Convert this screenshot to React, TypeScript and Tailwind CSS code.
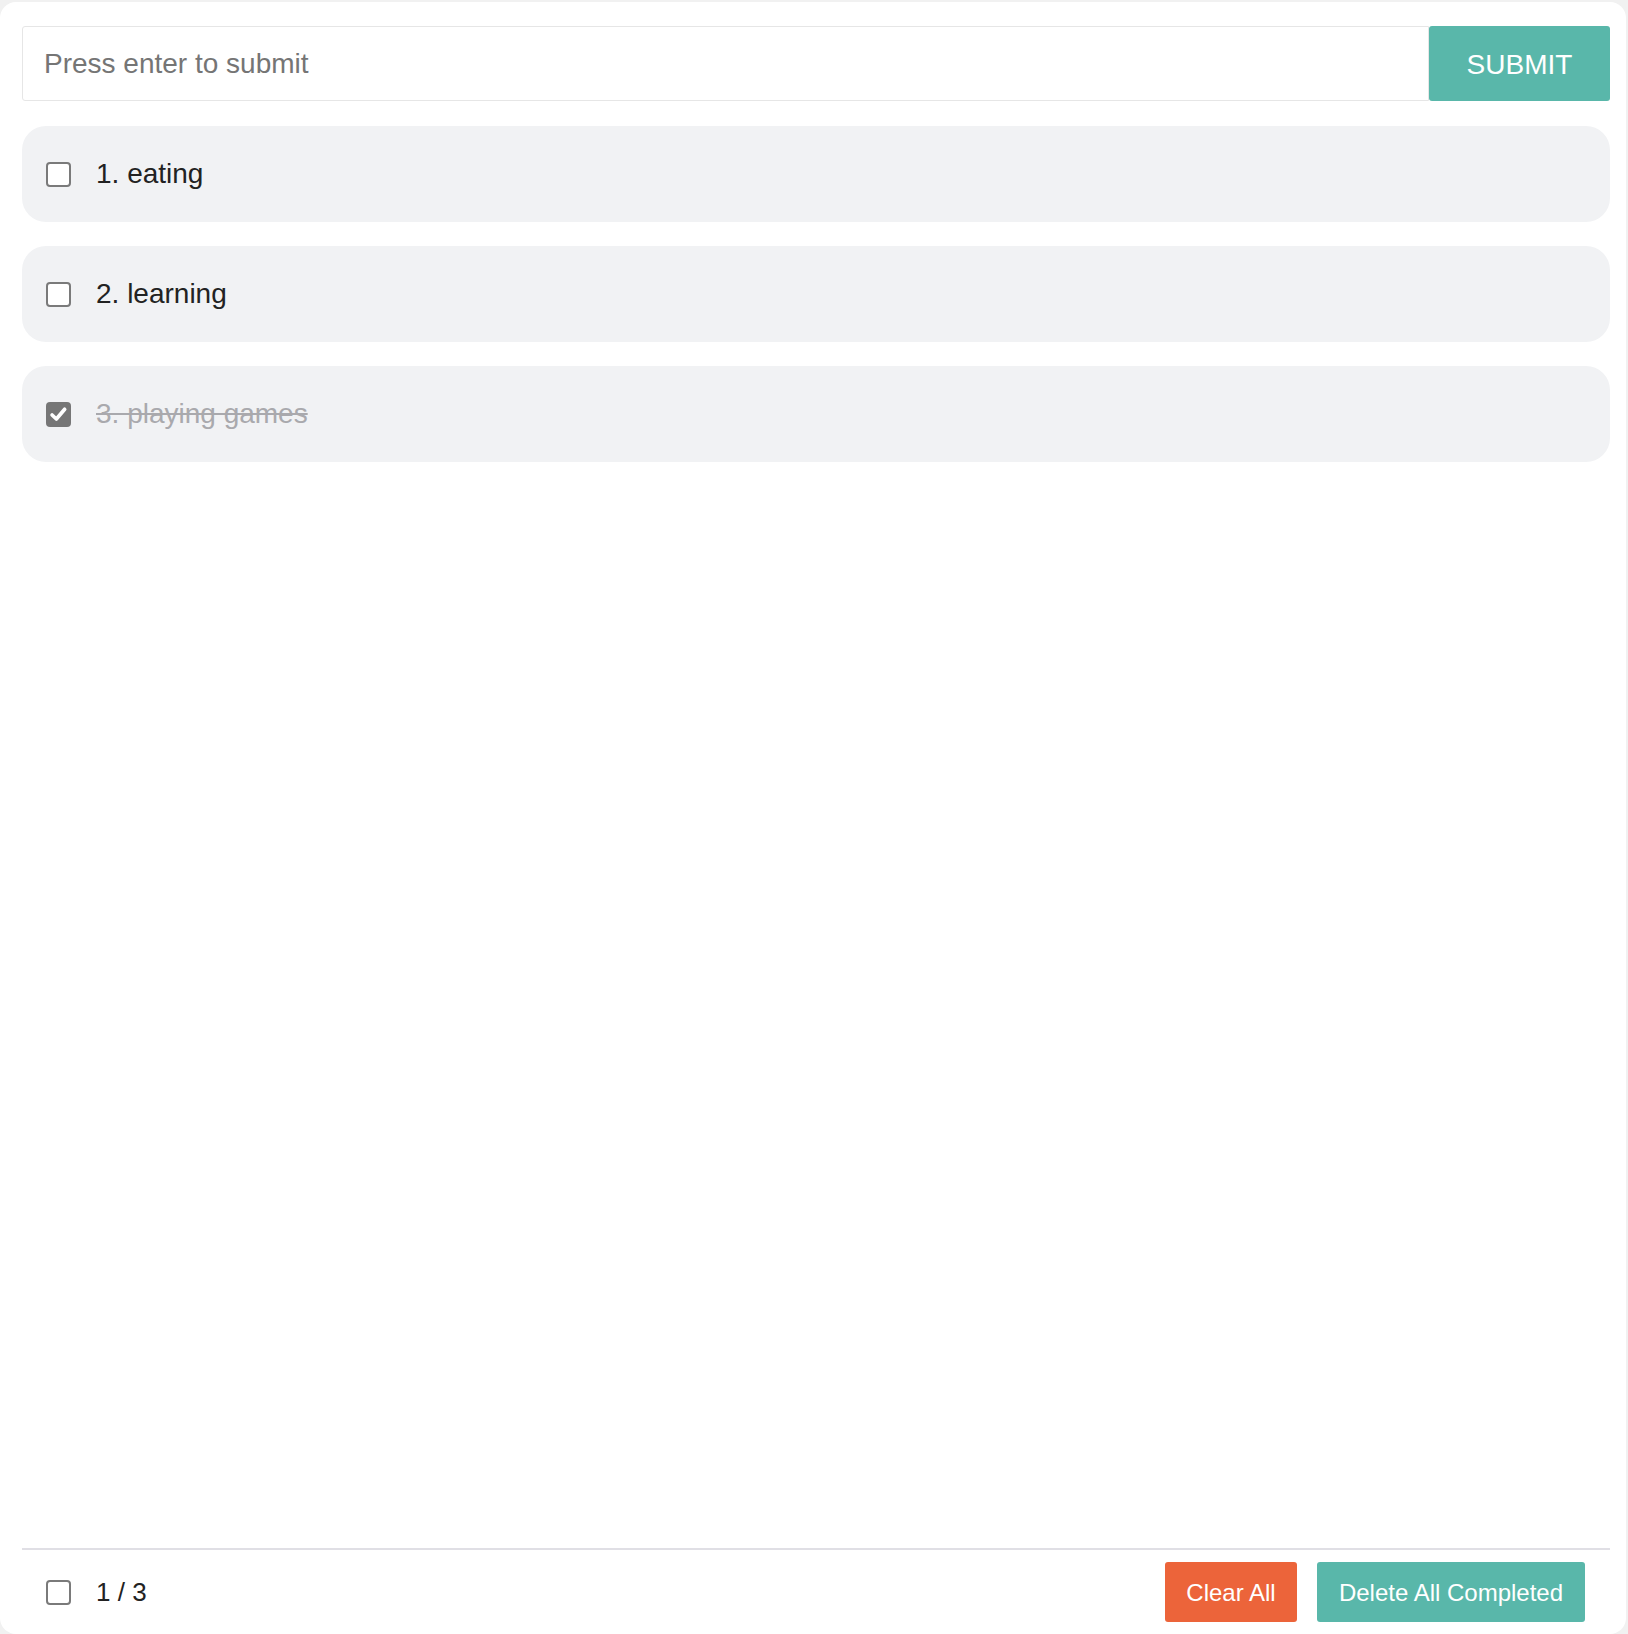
import React from "react";

const font = { fontFamily: '"Liberation Sans", Arial, Helvetica, sans-serif' };

function Box({ checked }: { checked?: boolean }) {
  if (checked) {
    return (
      <span className="flex h-[25px] w-[25px] shrink-0 items-center justify-center rounded-[4px] bg-[#767676]">
        <svg width="19" height="19" viewBox="0 0 16 16" fill="none">
          <path d="M2.6 8.4 L6.2 11.8 L13.2 3.6" stroke="#fff" strokeWidth="3.1" strokeLinecap="round" strokeLinejoin="round" />
        </svg>
      </span>
    );
  }
  return <span className="block h-[25px] w-[25px] shrink-0 rounded-[4px] border-2 border-[#7a7a7a] bg-white" />;
}

const items = [
  { text: "1. eating", done: false },
  { text: "2. learning", done: false },
  { text: "3. playing games", done: true },
];

export default function App() {
  return (
    <div className="min-h-[1634px] bg-[#f1f1f1] pt-[2px]" style={font}>
      <div className="flex h-[1632px] w-[1626px] flex-col rounded-[16px] bg-white pl-[22px] pr-[16px] pt-[24px]">
        <div className="flex h-[75px]">
          <div className="flex flex-1 items-center rounded-l-[3px] border border-[#e6e6e6] pl-[21px] text-[28px] text-[#757575]">
            Press enter to submit
          </div>
          <button className="flex w-[181px] items-center justify-center rounded-[3px] bg-[#59b7aa] pt-[2px] text-[28px] text-white">
            SUBMIT
          </button>
        </div>
        <div className="mt-[25px] flex flex-col gap-[24px]">
          {items.map((it) => (
            <div key={it.text} className="flex h-[96px] items-center gap-[25px] rounded-[24px] bg-[#f1f2f4] pl-[24px]">
              <Box checked={it.done} />
              <span className={it.done ? "text-[28px] text-[#a9a9ad] line-through" : "text-[28px] text-[#222]"}>{it.text}</span>
            </div>
          ))}
        </div>
        <div className="flex-1" />
        <div className="flex items-center border-t-2 border-[#e0dfe5] pb-[12px] pl-[24px] pr-[25px] pt-[12px]">
          <Box />
          <span className="ml-[25px] text-[26px] text-[#222]">1 / 3</span>
          <div className="flex-1" />
          <button className="flex h-[60px] w-[132px] items-center justify-center rounded-[3px] bg-[#ec643a] pt-[2px] text-[24px] text-white">
            Clear All
          </button>
          <button className="ml-[20px] flex h-[60px] w-[268px] items-center justify-center rounded-[3px] bg-[#59b7aa] pt-[2px] text-[24px] text-white">
            Delete All Completed
          </button>
        </div>
      </div>
    </div>
  );
}
